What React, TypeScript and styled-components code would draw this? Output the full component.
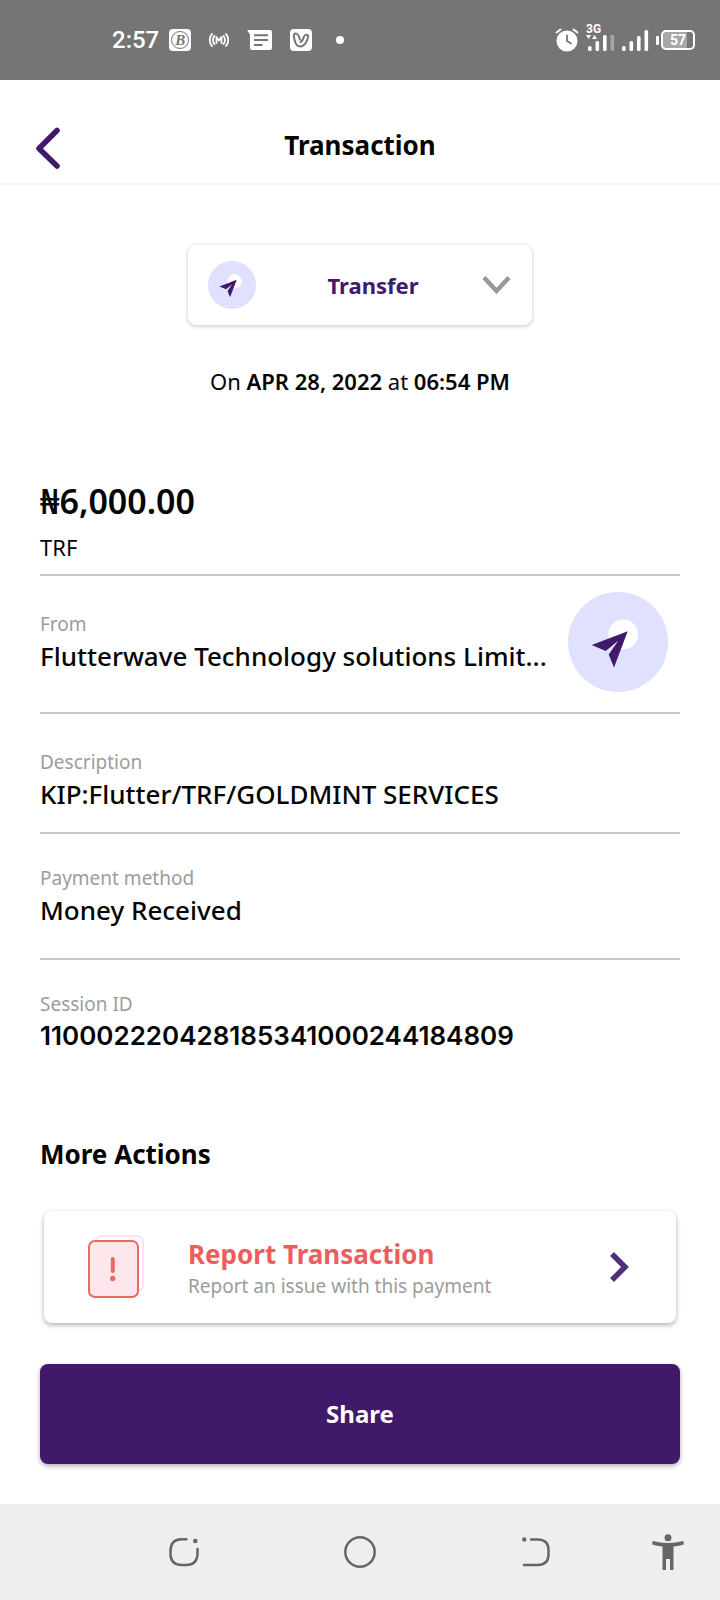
import React from 'react';
import styled, { createGlobalStyle } from 'styled-components';

const purple = '#41196b';
const coral = '#ee5d5d';
const grey = '#9c9c9c';
const sans = '"Noto Sans", "Open Sans", sans-serif';

const GlobalStyle = createGlobalStyle`
  *, *::before, *::after { box-sizing: border-box; }
  body { margin: 0; background: #fff; color: #050505; font-family: ${sans}; }
  h1, h2, p, dl, dt, dd { margin: 0; }
  button, select { font-family: inherit; }
  svg { display: block; flex: none; }
`;

const Screen = styled.div`
  display: flex;
  flex-direction: column;
  min-height: 100vh;
`;

/* Status bar */

const StatusBar = styled.div`
  display: flex;
  align-items: center;
  justify-content: space-between;
  height: 80px;
  padding: 0 25px 0 112px;
  background: #757575;
  color: #fff;
  font-family: Roboto, sans-serif;
`;

const StatusGroup = styled.div<{ $gap: number }>`
  display: flex;
  align-items: center;
  gap: ${(p) => p.$gap}px;
`;

const Clock = styled.time`
  display: flex;
  align-items: center;
  gap: 10px;
  font-size: 24px;
  line-height: 28px;
  font-weight: 500;
`;

const AppBadge = styled.span`
  display: grid;
  place-items: center;
  width: 22px;
  height: 22px;
  border-radius: 4px;
  background: #fff;
  color: #757575;
`;

const CoinMark = styled.span`
  display: grid;
  place-items: center;
  width: 18px;
  height: 18px;
  border: 1px solid #757575;
  border-radius: 50%;
  font: italic bold 15px/16px "Liberation Serif", serif;
`;

const Network = styled.span`
  display: flex;
  flex-direction: column;
  align-items: flex-start;
  height: 28px;
  margin-top: -6px;
  font-size: 12px;
  line-height: 12px;
  font-weight: 700;
`;

const BatteryShell = styled.span`
  display: flex;
  align-items: center;
  gap: 2px;

  &::before {
    content: '';
    width: 3px;
    height: 9px;
    border-radius: 1px;
    background: #fff;
  }
`;

const BatteryLevel = styled.span`
  width: 34px;
  height: 20px;
  border: 2px solid #fff;
  border-radius: 5px;
  background: linear-gradient(90deg, #a8a8a8 80%, #757575 80%);
  font-size: 14px;
  line-height: 16px;
  font-weight: 700;
  text-align: center;
`;

/* Header */

const Header = styled.header`
  display: grid;
  grid-template-columns: 1fr auto 1fr;
  align-items: center;
  height: 105px;
  padding: 26px 32px 0;
  border-bottom: 2px solid #f6f6f6;
`;

const IconButton = styled.button`
  display: grid;
  place-items: center;
  justify-self: start;
  padding: 0;
  border: 0;
  background: none;
  cursor: pointer;
`;

const Heading = styled.h1`
  font-size: 26px;
  line-height: 32px;
  font-weight: 700;
`;

/* Content */

const Content = styled.main`
  display: flex;
  flex-direction: column;
  padding: 60px 40px 40px;
`;

const TypePicker = styled.label`
  display: flex;
  align-items: center;
  align-self: center;
  width: 344px;
  max-width: 100%;
  height: 80px;
  padding: 0 20px;
  border-radius: 8px;
  background: #fff;
  box-shadow: 0 1px 4px rgba(0, 0, 0, 0.24);
`;

const TypeSelect = styled.select`
  flex: 1;
  min-width: 0;
  height: 48px;
  padding: 0 0 0 8px;
  border: 0;
  appearance: none;
  background: none;
  color: ${purple};
  font-size: 22px;
  font-weight: 700;
  text-align: center;
  text-align-last: center;
`;

const DateLine = styled.p`
  margin-top: 40px;
  font-size: 22px;
  line-height: 32px;
  font-weight: 400;
  text-align: center;

  strong { font-weight: 600; }
`;

const Summary = styled.section`
  margin-top: 80px;
  padding-bottom: 13px;
  border-bottom: 2px solid #c9c9c9;
`;

const Amount = styled.p`
  font-size: 34px;
  line-height: 48px;
  font-weight: 600;
`;

const Kind = styled.p`
  margin-top: 8px;
  font-size: 22px;
  line-height: 28px;
  font-weight: 400;
`;

const Details = styled.dl`
  display: flex;
  flex-direction: column;
`;

const DetailRow = styled.div<{ $top: number; $bottom: number }>`
  display: flex;
  align-items: center;
  justify-content: space-between;
  padding: ${(p) => p.$top}px 12px ${(p) => p.$bottom}px 0;
  border-bottom: 2px solid #c9c9c9;

  &:last-child { padding-bottom: 0; border-bottom: 0; }
`;

const DetailText = styled.div`
  min-width: 0;
`;

const Label = styled.dt`
  color: ${grey};
  font-size: 19px;
  line-height: 28px;
  font-weight: 400;
`;

const Value = styled.dd<{ $numeric?: boolean }>`
  overflow: hidden;
  font-family: ${(p) => (p.$numeric ? 'Inter, sans-serif' : sans)};
  font-size: 26px;
  line-height: 36px;
  font-weight: ${(p) => (p.$numeric ? 600 : 500)};
  text-overflow: ellipsis;
  white-space: nowrap;
`;

const SectionTitle = styled.h2`
  margin-top: 82px;
  font-size: 26px;
  line-height: 36px;
  font-weight: 700;
`;

const ReportCard = styled.button`
  display: flex;
  align-items: center;
  gap: 44px;
  height: 112px;
  margin: 39px 4px 0;
  padding: 0 46px 0 44px;
  border: 0;
  border-radius: 8px;
  background: #fff;
  box-shadow: 0 2px 5px rgba(0, 0, 0, 0.32);
  text-align: left;
  cursor: pointer;
`;

const ReportText = styled.span`
  flex: 1;
  display: flex;
  flex-direction: column;
  padding-top: 2px;
`;

const ReportTitle = styled.span`
  color: ${coral};
  font-size: 26px;
  line-height: 36px;
  font-weight: 700;
`;

const ReportHint = styled.span`
  color: ${grey};
  font-size: 19px;
  line-height: 28px;
  font-weight: 400;
`;

const ShareButton = styled.button`
  height: 100px;
  margin-top: 41px;
  border: 0;
  border-radius: 8px;
  background: ${purple};
  box-shadow: 0 2px 5px rgba(0, 0, 0, 0.32);
  color: #fff;
  font-size: 24px;
  line-height: 32px;
  font-weight: 700;
  cursor: pointer;
`;

/* System navigation */

const NavBar = styled.nav`
  display: grid;
  grid-template-columns: 12fr 22fr 22fr 22fr 11fr 1fr;
  height: 96px;
  margin-top: auto;
  background: #efefef;
  color: #666;
`;

const NavButton = styled.button`
  display: grid;
  place-items: center;
  padding: 0;
  border: 0;
  background: none;
  color: inherit;
  cursor: pointer;

  &:first-child { grid-column: 2; }
`;

function PlaneIcon({ size }: { size: number }) {
  return (
    <svg width={size} height={size} viewBox="0 0 100 100" aria-hidden="true">
      <circle cx="50" cy="50" r="50" fill="#dfe1ff" />
      <circle cx="55.3" cy="42.5" r="15" fill="#fff" />
      <path d="M59.7 39.3 23.7 53 37.7 58.9 50 49 40.7 62.4 46 75.5Z" fill={purple} />
    </svg>
  );
}

function SignalBars({ heights }: { heights: number[] }) {
  return (
    <svg width="27" height="21" viewBox="0 0 27 21" aria-hidden="true">
      {heights.map((h, i) => (
        <rect key={i} x={i * 7.5} y={21 - h} width="3.6" height={h} rx="1.5" fill="#fff" />
      ))}
    </svg>
  );
}

function StatusIcons() {
  return (
    <>
      <StatusGroup $gap={17}>
        <Clock>
          2:57
          <AppBadge><CoinMark>B</CoinMark></AppBadge>
        </Clock>
        <svg width="22" height="16" viewBox="0 0 22 16" fill="none" stroke="#fff" strokeWidth="1.8" strokeLinecap="round" strokeLinejoin="round" aria-hidden="true">
          <path d="M4 2C1 5 1 11 4 14M6.500 4C4.500 6 4.500 10 6.500 12M18 2c3 3 3 9 0 12M15.500 4c2 2 2 6 0 8" />
          <path d="M8.500 11V5L11 8.500 13.500 5v6" />
        </svg>
        <svg width="26" height="22" viewBox="0 0 26 22" aria-hidden="true">
          <path d="M0 1h23q2 0 2 2v16q0 2-2 2H5q-2 0-2-2V5.500Z" fill="#fff" />
          <path d="M7 6.300h14M7 11h14M7 16h8.500" stroke="#757575" strokeWidth="2" />
        </svg>
        <AppBadge>
          <svg width="18" height="18" viewBox="0 0 18 18" fill="none" stroke="#757575" strokeWidth="2" strokeLinecap="round" strokeLinejoin="round" aria-hidden="true">
            <path d="M8 8.500C7 5 5.500 2.500 3.500 2.500 1 2.500 2 7 3 10.500 4 14 5.500 15.500 8 15.500c4.500 0 8-6 8-10 0-2.500-3-2.500-4 0C11 8 10.500 10.500 8.500 11" />
          </svg>
        </AppBadge>
        <svg width="22" height="8" viewBox="0 0 22 8" aria-hidden="true">
          <circle cx="11" cy="4" r="4" fill="#fff" />
        </svg>
      </StatusGroup>
      <StatusGroup $gap={7}>
        <svg width="24" height="24" viewBox="0 0 24 24" fill="none" aria-hidden="true">
          <circle cx="12" cy="13" r="10.500" fill="#fff" />
          <path d="M1.500 4.500 5.500 1.500M22.500 4.500l-4-3" stroke="#fff" strokeWidth="2" strokeLinecap="round" />
          <path d="M12 7.500V13l4 2.500" stroke="#757575" strokeWidth="1.800" strokeLinecap="round" />
        </svg>
        <Network>
          3G
          <svg width="29" height="16" viewBox="0 0 29 16" fill="#fff" aria-hidden="true">
            <path d="M0 0h5L2.500 4ZM6 4h5L8.500 0Z" />
            <rect x="2" y="11" width="3.600" height="5" rx="1.500" />
            <rect x="9.500" y="6" width="3.600" height="10" rx="1.500" />
            <rect x="17" y="0" width="3.600" height="16" rx="1.500" />
            <rect x="24.500" y="-5" width="3.600" height="21" rx="1.500" opacity="0.350" />
          </svg>
        </Network>
        <SignalBars heights={[5, 10, 15, 21]} />
        <BatteryShell><BatteryLevel>57</BatteryLevel></BatteryShell>
      </StatusGroup>
    </>
  );
}

const details = [
  { label: 'From', value: 'Flutterwave Technology solutions Limit...', top: 16, bottom: 20, plane: true },
  { label: 'Description', value: 'KIP:Flutter/TRF/GOLDMINT SERVICES', top: 34, bottom: 20 },
  { label: 'Payment method', value: 'Money Received', top: 30, bottom: 30 },
  { label: 'Session ID', value: '110002220428185341000244184809', top: 30, bottom: 0, numeric: true },
];

export default function App() {
  return (
    <Screen>
      <GlobalStyle />
      <StatusBar><StatusIcons /></StatusBar>

      <Header>
        <IconButton type="button" aria-label="Back">
          <svg width="32" height="48" viewBox="0 0 32 48" fill="none" stroke={purple} strokeWidth="5.500" strokeLinecap="round" strokeLinejoin="round" aria-hidden="true">
            <path d="M25 9.500 7 27.500 25 45" />
          </svg>
        </IconButton>
        <Heading>Transaction</Heading>
      </Header>

      <Content>
        <TypePicker>
          <PlaneIcon size={48} />
          <TypeSelect aria-label="Transaction type" defaultValue="Transfer">
            <option>Transfer</option>
          </TypeSelect>
          <svg width="30" height="20" viewBox="0 0 30 20" fill="none" stroke="#999" strokeWidth="4.500" aria-hidden="true">
            <path d="M2 2.500 14.500 16 27 2.500" />
          </svg>
        </TypePicker>

        <DateLine>
          On <strong>APR 28, 2022</strong> at <strong>06:54 PM</strong>
        </DateLine>

        <Summary>
          <Amount>₦6,000.00</Amount>
          <Kind>TRF</Kind>
        </Summary>

        <Details>
          {details.map((d) => (
            <DetailRow key={d.label} $top={d.top} $bottom={d.bottom}>
              <DetailText>
                <Label>{d.label}</Label>
                <Value $numeric={d.numeric}>{d.value}</Value>
              </DetailText>
              {d.plane && <PlaneIcon size={100} />}
            </DetailRow>
          ))}
        </Details>

        <SectionTitle>More Actions</SectionTitle>
        <ReportCard type="button">
          <svg width="56" height="64" viewBox="0 0 56 64" fill="none" aria-hidden="true">
            <rect x="8" y="1" width="47" height="55" rx="6" stroke="#fde3e8" strokeWidth="2" />
            <rect x="1" y="6" width="49" height="56" rx="6" fill="#fde6ec" stroke="#ea6a63" strokeWidth="2" />
            <path d="M24.800 24v12" stroke="#ea6a63" strokeWidth="4" strokeLinecap="round" />
            <circle cx="24.800" cy="43.500" r="2.700" fill="#ea6a63" />
          </svg>
          <ReportText>
            <ReportTitle>Report Transaction</ReportTitle>
            <ReportHint>Report an issue with this payment</ReportHint>
          </ReportText>
          <svg width="22" height="30" viewBox="0 0 22 30" fill="none" stroke="#4f2f7a" strokeWidth="5.500" aria-hidden="true">
            <path d="M4 2 17 15 4 28" />
          </svg>
        </ReportCard>

        <ShareButton type="button">Share</ShareButton>
      </Content>

      <NavBar>
        <NavButton type="button" aria-label="Recent apps">
          <svg width="30" height="30" viewBox="0 0 30 30" fill="none" stroke="currentColor" strokeWidth="2.500" strokeLinecap="round" aria-hidden="true">
            <path d="M17.500 2.300H13Q1.500 2.300 1.500 14v3Q1.500 28 13 28h4Q28.500 28 28.500 16v-4" />
            <circle cx="26.300" cy="4" r="2.300" fill="currentColor" stroke="none" />
          </svg>
        </NavButton>
        <NavButton type="button" aria-label="Home">
          <svg width="32" height="32" viewBox="0 0 32 32" fill="none" stroke="currentColor" strokeWidth="2.500" aria-hidden="true">
            <circle cx="16" cy="16" r="14.700" />
          </svg>
        </NavButton>
        <NavButton type="button" aria-label="Go back">
          <svg width="28" height="30" viewBox="0 0 28 30" fill="none" stroke="currentColor" strokeWidth="2.500" strokeLinecap="round" aria-hidden="true">
            <path d="M9 2.500h6.500Q26.500 2.500 26.500 13v4.500Q26.500 28 15.500 28H2" />
            <circle cx="2.300" cy="2.500" r="2.200" fill="currentColor" stroke="none" />
          </svg>
        </NavButton>
        <NavButton type="button" aria-label="Accessibility">
          <svg width="32" height="36" viewBox="0 0 32 36" fill="currentColor" aria-hidden="true">
            <circle cx="16" cy="3.700" r="3.500" />
            <path d="M.8 7Q16 11 31.200 7L32 10.500Q27 12 21.500 12.500V36H18V25h-4v11h-3.500V12.500Q5 12 0 10.500Z" />
          </svg>
        </NavButton>
      </NavBar>
    </Screen>
  );
}
